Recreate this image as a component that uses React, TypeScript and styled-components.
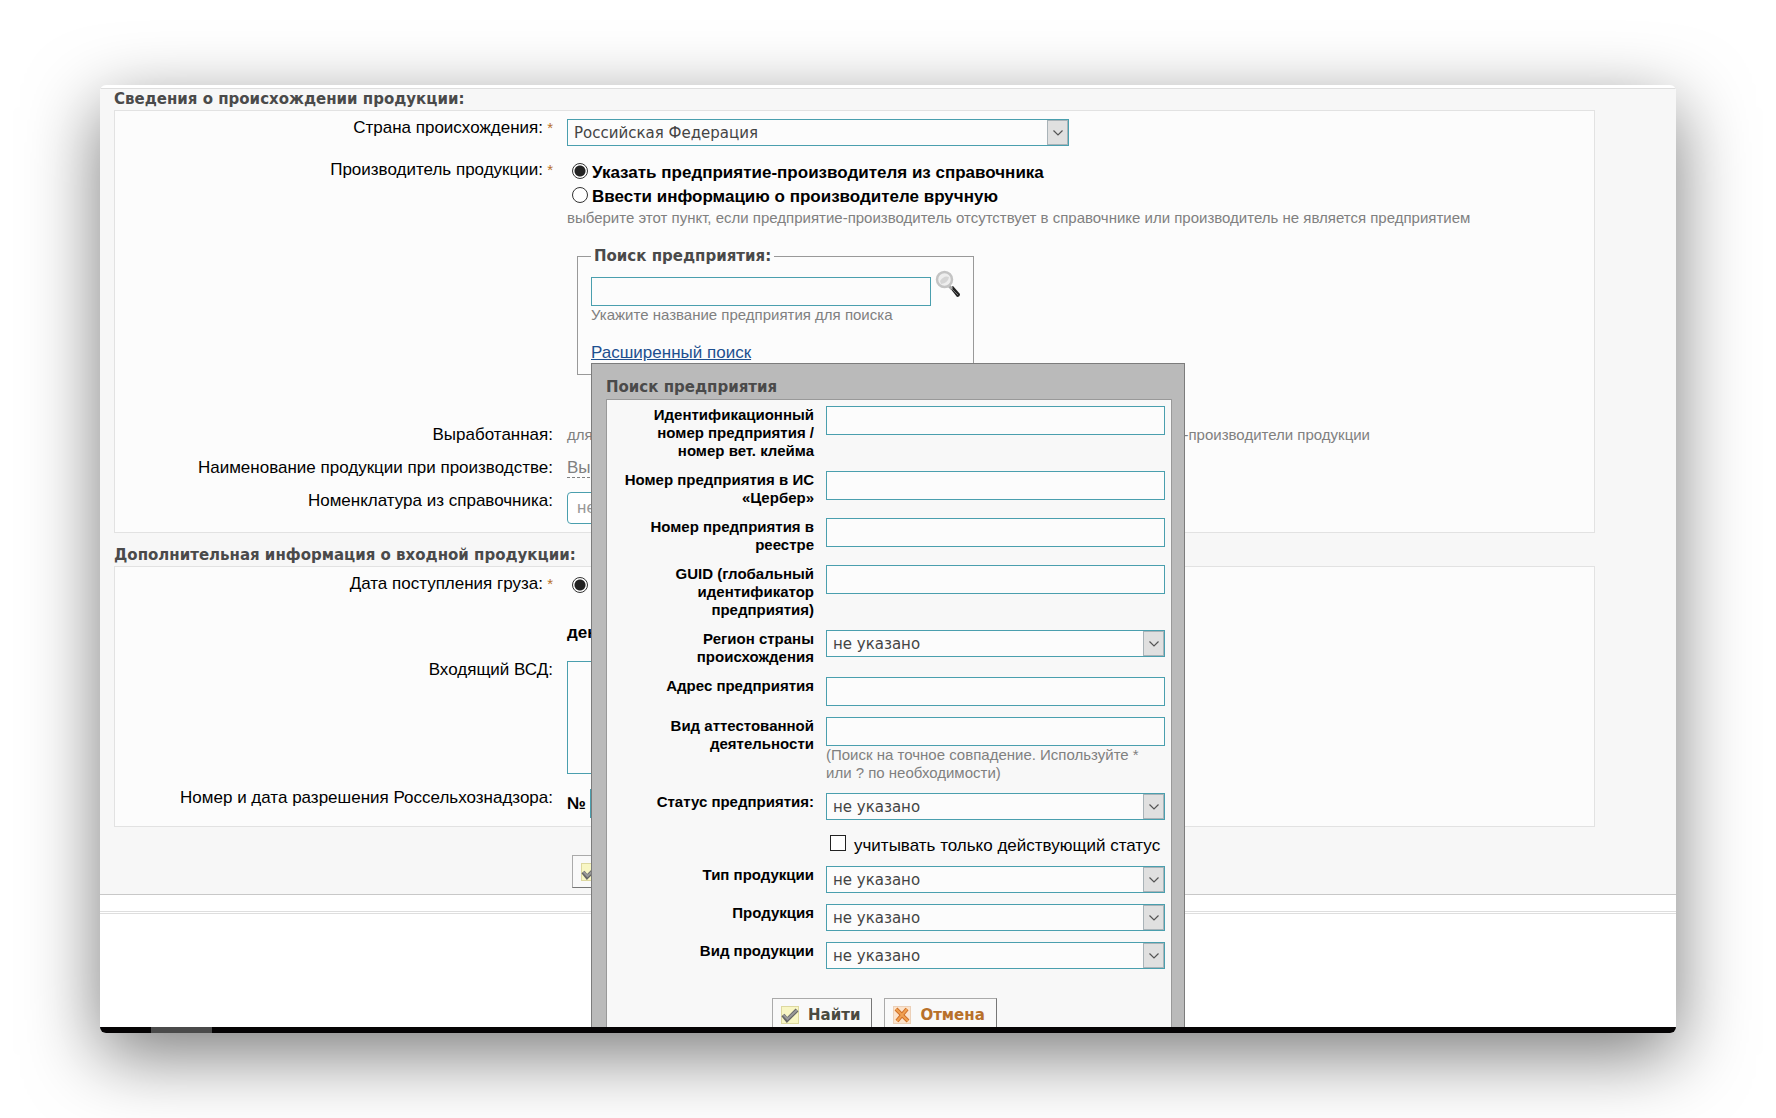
import React, { ReactNode } from "react";
import styled, { createGlobalStyle, css } from "styled-components";

const arial = '"Liberation Sans", Arial, sans-serif';
const verdana = 'Verdana, "DejaVu Sans", sans-serif';
const teal = "#4a9fae";

const GlobalStyle = createGlobalStyle`
  *, *::before, *::after { box-sizing: border-box; }
  body { margin: 0; background: #fff; color: #000; font: 17px/18px ${arial}; }
`;

const Page = styled.div`
  display: flex;
  min-height: 100vh;
  padding: 85px 100px;
  overflow: hidden;
`;

const Screen = styled.main`
  flex: 1;
  display: flex;
  flex-direction: column;
  min-width: 0;
  border-radius: 6px;
  overflow: hidden;
  background: #fff;
  box-shadow: 0 22px 72px rgba(0, 0, 0, 0.52);
`;

const Viewport = styled.div`
  position: relative;
  flex: 1;
  overflow: hidden;
  padding-top: 3px;
`;

const Taskbar = styled.div`
  flex: none;
  height: 6px;
  padding-left: 51px;
  background: #050304;
`;

const TaskbarItem = styled.div`
  width: 61px;
  height: 6px;
  background: #4a4a4a;
`;

const Form = styled.form`
  padding: 1px 81px 6px 14px;
  background: #f7f7f7;
  border-top: 1px solid #dedede;
  border-bottom: 1px solid #c8c8c8;
`;

const FooterRule = styled.div`
  height: 3px;
  margin-top: 16px;
  border: solid #dedede;
  border-width: 1px 0;
`;

const Section = styled.section`
  & + & {
    margin-top: 13px;
  }
`;

const Heading = styled.h2`
  margin: 0 0 2px;
  font: bold 15px/18px ${verdana};
  color: #4a4a4a;
`;

const Box = styled.div`
  display: flex;
  flex-direction: column;
  gap: 15px;
  padding: 8px 0;
  background: #fcfcfc;
  border: 1px solid #e2e2e2;
`;

const Row = styled.div<{ $tall?: boolean }>`
  display: grid;
  grid-template-columns: 438px 1fr;
  column-gap: 14px;
  min-height: ${(p) => (p.$tall ? "71px" : "18px")};
`;

const LabelCell = styled.div`
  text-align: right;
`;

const Star = styled.span`
  font-size: 15px;
  color: #b8702a;
`;

const Hint = styled.div`
  font-size: 15px;
  color: #808080;
`;

const SplitHint = styled(Hint)`
  display: flex;
  justify-content: space-between;
  max-width: 803px;
`;

const RadioLine = styled.label`
  display: flex;
  align-items: center;
  gap: 4px;
  height: 24px;
  padding-left: 5px;
  font-weight: bold;
`;

const Radio = styled.input`
  appearance: none;
  flex: none;
  width: 16px;
  height: 16px;
  margin: 0 0 4px;
  border: 1px solid #333;
  border-radius: 50%;
  background: #fff;

  &:checked {
    background: radial-gradient(circle, #222 0 5px, #fff 6px);
  }
`;

const Fieldset = styled.fieldset`
  width: 397px;
  margin: 20px 0 36px 10px;
  padding: 12px 13px;
  border: 1px solid #999;
`;

const Legend = styled.legend`
  padding: 0 3px;
  font: bold 15px/18px ${verdana};
  color: #4a4a4a;
`;

const SearchLine = styled.div`
  display: flex;
  gap: 4px;
`;

const IconButton = styled.button`
  flex: none;
  width: 26px;
  height: 28px;
  margin: -7px -1px 0 0;
  padding: 0;
  border: 0;
  background: none;
`;

const field = css`
  border: 1px solid ${teal};
  border-radius: 0;
  background: #fcfcfc;
  color: #444;
  font: 15px/18px ${verdana};
`;

const TextInput = styled.input`
  ${field}
  display: block;
  width: 100%;
  min-width: 0;
  height: 29px;
  padding: 0 6px;
`;

const NumberInput = styled(TextInput)`
  width: 160px;
  background: #4a90b0;
`;

const TextArea = styled.textarea`
  ${field}
  display: block;
  width: 502px;
  height: 113px;
  resize: none;
`;

const SelectWrap = styled.div<{ $width?: string }>`
  position: relative;
  width: ${(p) => p.$width || "100%"};
  height: 27px;
`;

const SelectBox = styled.select`
  ${field}
  appearance: none;
  display: block;
  width: 100%;
  height: 27px;
  padding: 0 28px 0 6px;
`;

const ArrowBox = styled.span`
  position: absolute;
  top: 1px;
  right: 1px;
  bottom: 1px;
  display: grid;
  place-items: center;
  width: 21px;
  border: 1px solid #a9b3b8;
  background: #e0e0e0;
  pointer-events: none;
`;

const RoundedSelect = styled.select`
  ${field}
  appearance: none;
  display: block;
  width: 502px;
  height: 32px;
  padding: 0 9px;
  border-radius: 4px;
  background: #fff;
  color: #999;
  font: 17px/18px ${arial};
`;

const Link = styled.a`
  display: inline-block;
  margin-top: 20px;
  color: #1d4f8f;
`;

const DashedLink = styled.a`
  border-bottom: 1px dashed #808080;
  color: #808080;
  text-decoration: none;
`;

const UnitText = styled.div`
  margin-top: 25px;
  font-weight: bold;
`;

const NumberLine = styled.div`
  display: flex;
  align-items: center;
  gap: 4px;
  font-weight: bold;
`;

const Actions = styled.div`
  padding: 28px 0 0 458px;
`;

const Button = styled.button<{ $color: string }>`
  display: inline-flex;
  align-items: center;
  gap: 9px;
  height: 33px;
  padding: 0 11px 0 8px;
  border: 1px solid #aaa;
  border-right-color: #777;
  border-bottom-color: #777;
  background: #f9f9f9;
  color: ${(p) => p.$color};
  font: bold 15px/18px ${verdana};
`;

const Dialog = styled.div`
  position: absolute;
  top: 278px;
  left: 0;
  right: 0;
  width: 594px;
  margin: 0 auto;
  padding: 14px 12px 0 14px;
  border: 1px solid #7c7c7c;
  background: #bababa;
`;

const DialogTitle = styled.h3`
  margin: 0 0 3px;
  font: bold 15px/18px ${verdana};
  color: #4a4a4a;
`;

const DialogForm = styled.form`
  display: flex;
  flex-direction: column;
  gap: 11px;
  padding: 6px 6px 24px 0;
  border: 1px solid #999;
  background: #f8f8f8;
`;

const DialogRow = styled.div`
  display: grid;
  grid-template-columns: 207px 1fr;
  column-gap: 12px;
`;

const DialogLabel = styled.label`
  padding-left: 10px;
  font-size: 15px;
  font-weight: bold;
  text-align: right;
`;

const CheckLine = styled.label`
  grid-column: 2;
  display: flex;
  align-items: flex-end;
  gap: 8px;
  height: 24px;
  padding-left: 4px;
`;

const Checkbox = styled.input`
  appearance: none;
  flex: none;
  width: 16px;
  height: 16px;
  margin: 0 0 4px;
  border: 1px solid #222;
  background: #fff;
`;

const DialogActions = styled.div`
  display: flex;
  gap: 12px;
  padding: 18px 0 0 165px;
`;

const Magnifier = () => (
  <svg width="26" height="28" viewBox="0 0 26 28" aria-hidden="true">
    <path d="M15 18l3-2 7 8q0 3-3 3z" fill="#222" />
    <path d="M17 19l6 6" stroke="#777" strokeWidth="1" />
    <path d="M13 15l4 4" stroke="#aaa" strokeWidth="3" />
    <circle cx="9.500" cy="9.500" r="7.500" fill="#eee" stroke="#c4c4c4" strokeWidth="2.500" />
    <path d="M5 11q4-6 9-4-1 6-8 7z" fill="#d5d5d5" />
  </svg>
);

const CheckIcon = () => (
  <svg width="18" height="18" viewBox="0 0 18 18" aria-hidden="true">
    <rect x=".5" y=".5" width="17" height="17" fill="#f8f6c4" stroke="#ddd8a0" />
    <path d="M2 9l4 5L16 4" fill="none" stroke="#666" strokeWidth="4" />
    <path d="M2.500 9l4 4L16 4" fill="none" stroke="#999" strokeWidth="2" />
  </svg>
);

const CrossIcon = () => (
  <svg width="18" height="18" viewBox="0 0 18 18" aria-hidden="true">
    <rect x=".5" y=".5" width="17" height="17" fill="#fbe3cc" stroke="#ecd0b8" />
    <path d="M3 3l12 12M14 3L4 15" fill="none" stroke="#cf6f28" strokeWidth="4" />
    <path d="M3 3l12 12M14 3L4 15" fill="none" stroke="#f0a050" strokeWidth="2" />
  </svg>
);

function Select({ id, value, width }: { id: string; value: string; width?: string }) {
  return (
    <SelectWrap $width={width}>
      <SelectBox id={id}>
        <option>{value}</option>
      </SelectBox>
      <ArrowBox>
        <svg width="10" height="6" viewBox="0 0 10 6" aria-hidden="true">
          <path d="M.5 .5L5 5 9.500 .5" fill="none" stroke="#555" strokeWidth="1.200" />
        </svg>
      </ArrowBox>
    </SelectWrap>
  );
}

type FieldRowProps = {
  label: string;
  id?: string;
  required?: boolean;
  tall?: boolean;
  children: ReactNode;
};

function FieldRow({ label, id, required, tall, children }: FieldRowProps) {
  return (
    <Row $tall={tall}>
      <LabelCell>
        <label htmlFor={id}>{label}</label>
        {required && <Star> *</Star>}
      </LabelCell>
      <div>{children}</div>
    </Row>
  );
}

type DialogField = { id: string; label: string; select?: boolean; hint?: string; check?: string };

const dialogFields: DialogField[] = [
  { id: "ident", label: "Идентификационный номер предприятия / номер вет. клейма" },
  { id: "cerber", label: "Номер предприятия в ИС «Цербер»" },
  { id: "registry", label: "Номер предприятия в реестре" },
  { id: "guid", label: "GUID (глобальный идентификатор предприятия)" },
  { id: "region", label: "Регион страны происхождения", select: true },
  { id: "address", label: "Адрес предприятия" },
  {
    id: "activity",
    label: "Вид аттестованной деятельности",
    hint: "(Поиск на точное совпадение. Используйте * или ? по необходимости)",
  },
  { id: "status", label: "Статус предприятия:", select: true, check: "учитывать только действующий статус" },
  { id: "type", label: "Тип продукции", select: true },
  { id: "product", label: "Продукция", select: true },
  { id: "kind", label: "Вид продукции", select: true },
];

export default function App() {
  return (
    <>
      <GlobalStyle />
      <Page>
        <Screen>
          <Viewport>
            <Form>
              <Section>
                <Heading>Сведения о происхождении продукции:</Heading>
                <Box>
                  <FieldRow label="Страна происхождения:" id="country" required>
                    <Select id="country" value="Российская Федерация" width="502px" />
                  </FieldRow>
                  <FieldRow label="Производитель продукции:" id="from-list" required>
                    <RadioLine>
                      <Radio type="radio" name="producer" id="from-list" defaultChecked />
                      Указать предприятие-производителя из справочника
                    </RadioLine>
                    <RadioLine>
                      <Radio type="radio" name="producer" />
                      Ввести информацию о производителе вручную
                    </RadioLine>
                    <Hint>
                      выберите этот пункт, если предприятие-производитель отсутствует в справочнике или
                      производитель не является предприятием
                    </Hint>
                    <Fieldset>
                      <Legend>Поиск предприятия:</Legend>
                      <SearchLine>
                        <TextInput type="text" aria-label="Поиск предприятия" />
                        <IconButton type="button" aria-label="Поиск">
                          <Magnifier />
                        </IconButton>
                      </SearchLine>
                      <Hint>Укажите название предприятия для поиска</Hint>
                      <Link href="#search">Расширенный поиск</Link>
                    </Fieldset>
                  </FieldRow>
                  <FieldRow label="Выработанная:">
                    <SplitHint>
                      <span>для</span>
                      <span>предприятия-производители продукции</span>
                    </SplitHint>
                  </FieldRow>
                  <FieldRow label="Наименование продукции при производстве:">
                    <DashedLink href="#name">Выбрать</DashedLink>
                  </FieldRow>
                  <FieldRow label="Номенклатура из справочника:" id="nomenclature">
                    <RoundedSelect id="nomenclature">
                      <option>не указано</option>
                    </RoundedSelect>
                  </FieldRow>
                </Box>
              </Section>
              <Section>
                <Heading>Дополнительная информация о входной продукции:</Heading>
                <Box>
                  <FieldRow label="Дата поступления груза:" id="arrival" required tall>
                    <RadioLine>
                      <Radio type="radio" name="arrival" id="arrival" defaultChecked />
                    </RadioLine>
                    <UnitText>день</UnitText>
                  </FieldRow>
                  <FieldRow label="Входящий ВСД:" id="incoming">
                    <TextArea id="incoming" />
                  </FieldRow>
                  <FieldRow label="Номер и дата разрешения Россельхознадзора:" id="permit">
                    <NumberLine>
                      №
                      <NumberInput type="text" id="permit" />
                    </NumberLine>
                  </FieldRow>
                </Box>
              </Section>
              <Actions>
                <Button type="button" $color="#4a4a40" aria-label="Сохранить">
                  <CheckIcon />
                </Button>
              </Actions>
            </Form>
            <FooterRule />
            <Dialog role="dialog" aria-labelledby="dialog-title">
              <DialogTitle id="dialog-title">Поиск предприятия</DialogTitle>
              <DialogForm>
                {dialogFields.map((f) => (
                  <React.Fragment key={f.id}>
                    <DialogRow>
                      <DialogLabel htmlFor={f.id}>{f.label}</DialogLabel>
                      <div>
                        {f.select ? <Select id={f.id} value="не указано" /> : <TextInput type="text" id={f.id} />}
                        {f.hint && <Hint>{f.hint}</Hint>}
                      </div>
                    </DialogRow>
                    {f.check && (
                      <DialogRow>
                        <CheckLine>
                          <Checkbox type="checkbox" />
                          {f.check}
                        </CheckLine>
                      </DialogRow>
                    )}
                  </React.Fragment>
                ))}
                <DialogActions>
                  <Button type="button" $color="#4a4a40">
                    <CheckIcon />
                    Найти
                  </Button>
                  <Button type="button" $color="#b8702a">
                    <CrossIcon />
                    Отмена
                  </Button>
                </DialogActions>
              </DialogForm>
            </Dialog>
          </Viewport>
          <Taskbar>
            <TaskbarItem />
          </Taskbar>
        </Screen>
      </Page>
    </>
  );
}
